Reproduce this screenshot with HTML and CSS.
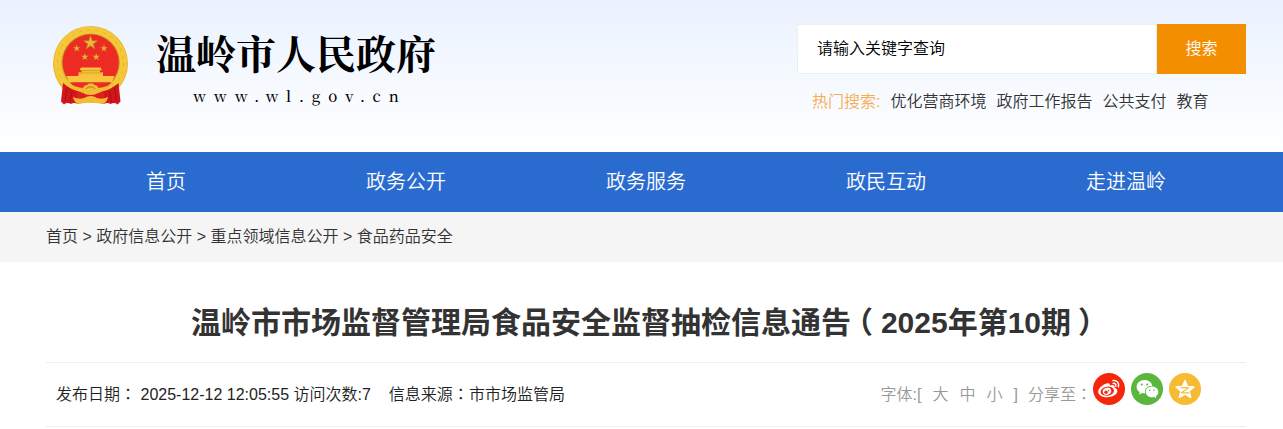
FILE: index.html
```html
<!DOCTYPE html>
<html lang="zh-CN">
<head>
	<meta charset="utf-8">
	<title>温岭市人民政府</title>
	<link rel="stylesheet" href="styles.css">
</head>
<body>

	<header class="header">
		<div class="wrap header-inner">

			<a class="logo" href="#">
				<svg class="emblem" viewBox="0 0 76 80" aria-hidden="true">
					<defs>
						<path id="star" d="M0-10 2.3-3.1 9.5-3.1 3.7 1.2 5.9 8.1 0 3.8-5.9 8.1-3.7 1.2-9.5-3.1-2.3-3.1z"/>
					</defs>
					<circle cx="37.5" cy="37.5" r="37.5" fill="#e9b52e"/>
					<circle cx="37.5" cy="37" r="33" fill="none" stroke="#f5c83a" stroke-width="7"/>
					<circle cx="37.5" cy="37" r="33" fill="none" stroke="#e6b030" stroke-width="1" stroke-dasharray="3 5"/>
					<circle cx="37.7" cy="36.5" r="28.8" fill="#c48a20"/>
					<circle cx="37.7" cy="36.5" r="28" fill="#ee2a24"/>
					<g fill="#e8b838" stroke="#b87a1c" stroke-width=".8">
						<use href="#star" transform="translate(37.5 17) scale(.75)"/>
						<use href="#star" transform="translate(23.7 22.4) scale(.38)"/>
						<use href="#star" transform="translate(51 22.4) scale(.38)"/>
						<use href="#star" transform="translate(31.8 31) scale(.38)"/>
						<use href="#star" transform="translate(43.2 31) scale(.38)"/>
					</g>
					<path d="M28 41.500h19.500l1.500 2.800H26.500zM28.500 44.300h18.500v2h-18.500zM25.500 46.300h24.500v3.700H25.500z" fill="#f6c43a"/>
					<path d="M28 44.600h19.500M26 47h23.500" stroke="#c8701c" stroke-width=".5"/>
					<path d="M13.500 50h48l-2.800 6.500h-42.400z" fill="#f8c63e"/>
					<path d="M17 56.500h41.500l-9 9h-23z" fill="#ee2a24"/>
					<path d="M10 57q8 7 16 8l-1 13q-4-2-7 0-4-2-7 .5l-3-3z" fill="#d3161b"/>
					<path d="M65.500 57q-8 7-16 8l1 13q4-2 7 0 4-2 7 .5l3-3z" fill="#d3161b"/>
					<path d="M14 62l-2 13M19 65l-2 11M61.500 62l2 13M56.500 65l2 11" stroke="#a81016" stroke-width="1"/>
					<path d="M24 65q14 6 27 0v13q-13-4-27 0z" fill="#e01f20"/>
					<path d="M13 56q8 5 17 6 1-3 4-3l1.500-1.500h4.500l1.500 1.500q3 0 4 3 9-1 17-6-6 9-17 10-2 3-8 3t-8-3q-11-1-16.500-10z" fill="#f2bd35"/>
					<path d="M33 63a5 4 0 0 1 9 0" fill="none" stroke="#b9761a" stroke-width="1"/>
					<path d="M20 71q6 3 11 1 7-4 13 0 5 2 11-1-1 5-5 7-5-1-9-1h-7q-4 0-9 1-4-2-5-7z" fill="#f2bd35"/>
				</svg>
				<span class="logo-text">
					<span class="logo-name">温岭市人民政府</span>
					<span class="logo-url">www.wl.gov.cn</span>
				</span>
			</a>

			<div class="search">
				<form class="search-form">
					<input class="search-input" type="text" value="请输入关键字查询" aria-label="请输入关键字查询">
					<button class="search-btn" type="button">搜索</button>
				</form>
				<div class="hot">
					<span class="hot-title">热门搜索:</span>
					<a href="#">优化营商环境</a>
					<a href="#">政府工作报告</a>
					<a href="#">公共支付</a>
					<a href="#">教育</a>
				</div>
			</div>

		</div>
	</header>

	<nav class="nav">
		<div class="wrap nav-inner">
			<a href="#">首页</a>
			<a href="#">政务公开</a>
			<a href="#">政务服务</a>
			<a href="#">政民互动</a>
			<a href="#">走进温岭</a>
		</div>
	</nav>

	<div class="crumbs">
		<div class="wrap">
			<a href="#">首页</a> &gt; <a href="#">政府信息公开</a> &gt; <a href="#">重点领域信息公开</a> &gt; <a href="#">食品药品安全</a>
		</div>
	</div>

	<main class="wrap">
		<h1 class="title">温岭市市场监督管理局食品安全监督抽检信息通告<span class="paren">（</span>2025年第10期<span class="paren">）</span></h1>

		<div class="meta">
			<div class="meta-info">
				<span>发布日期<span class="colon" lang="zh-TW">：</span> 2025-12-12 12:05:55 访问次数:7</span>
				<span>信息来源<span class="colon" lang="zh-TW">：</span>市市场监管局</span>
			</div>

			<div class="tools">
				<div class="font-size">
					<span>字体:[</span>
					<a href="#">大</a>
					<a href="#">中</a>
					<a href="#">小</a>
					<span>]</span>
				</div>
				<span class="share-label">分享至<span class="colon" lang="zh-TW">：</span></span>
				<div class="share">
					<a href="#" aria-label="微博">
						<svg viewBox="0 0 32 32">
							<circle cx="16" cy="16" r="16" fill="#f6260c"/>
							<path d="M13.500 10.500c2-.8 3.600-.2 3.300 2 2.800-1.200 5.500-.6 4.800 2.300 2.200.8 3.400 2.300 2.600 4.300-1.200 3.200-5.200 5.200-9.800 5.200-5.200 0-9.200-2.300-9.200-5.800 0-3 4.300-6.800 8.300-8z" fill="#fff"/>
							<ellipse cx="14.300" cy="18.200" rx="6.800" ry="4.600" transform="rotate(-8 14.300 18.200)" fill="#f6260c"/>
							<ellipse cx="14" cy="18.300" rx="4.300" ry="3.500" transform="rotate(-18 14 18.300)" fill="#fff"/>
							<circle cx="13" cy="19.200" r="1.700" fill="#f6260c"/>
							<circle cx="15.600" cy="17.700" r=".7" fill="#f6260c"/>
							<path d="M20 7.600c3.800-.6 6.500 2.400 5.400 6.200M20.200 10.400c1.800-.3 3 1 2.600 2.800" fill="none" stroke="#fff" stroke-width="1.500" stroke-linecap="round"/>
						</svg>
					</a>
					<a href="#" aria-label="微信">
						<svg viewBox="0 0 32 32">
							<circle cx="16" cy="16" r="16" fill="#5cb53c"/>
							<path d="M13.500 7c4.200 0 7.300 2.500 7.700 5.700-4.300 0-7.300 2.800-7.300 6 0 .6.1 1.200.3 1.700-1 .1-2.200 0-3.200-.3l-3 1.600.8-2.500C6.900 17.900 5.600 16 5.600 13.700 5.600 10 9 7 13.500 7z" fill="#fff"/>
							<path d="M21 13.500c3.600 0 6.300 2.400 6.300 5.400 0 1.800-.9 3.300-2.400 4.300l.6 2-2.300-1.200c-4.400 1-8.500-1.500-8.500-5.100 0-3 2.700-5.400 6.300-5.400z" fill="#fff"/>
							<g fill="#5cb53c">
								<circle cx="10.800" cy="11.600" r="1"/>
								<circle cx="16.200" cy="11.600" r="1"/>
								<circle cx="18.800" cy="17.200" r=".8"/>
								<circle cx="23" cy="17.200" r=".8"/>
							</g>
						</svg>
					</a>
					<a href="#" aria-label="QQ空间">
						<svg viewBox="0 0 32 32">
							<circle cx="16" cy="16" r="16" fill="#f6bb32"/>
							<path d="M16 7.500l2.400 5.900 6.500.5-4.900 4.200 1.600 6.300-5.600-3.400-5.600 3.400 1.600-6.300-4.900-4.200 6.500-.5z" fill="#fff" stroke="#fff" stroke-width="1.500" stroke-linejoin="round"/>
							<path d="M11.800 14.900q3.800-.7 7.300 0l-6.300 4.700q4 .6 7.500.1" fill="none" stroke="#f6bb32" stroke-width="1.300"/>
						</svg>
					</a>
				</div>
			</div>
		</div>
	</main>

</body>
</html>
```
FILE: styles.css
```css
body {
	margin: 0;
	background: #fff;
	color: #333;
	font-family: "Liberation Sans", "Noto Sans CJK SC", sans-serif;
	font-size: 16px;
	font-weight: 350;
	line-height: 24px;
}
a {
	color: inherit;
	text-decoration: none;
}
.wrap {
	box-sizing: border-box;
	max-width: 1209px;
	margin: 0 auto;
	padding-left: 9px;
}

/* header */
.header {
	background: linear-gradient(#eaf2ff, #fff);
}
.header-inner {
	display: flex;
	justify-content: space-between;
	min-height: 152px;
}
.logo {
	display: flex;
	align-items: flex-start;
	gap: 27px;
	padding: 26px 0 0 7px;
	color: #000;
}
.emblem {
	width: 76px;
	height: 80px;
}
.logo-text {
	display: flex;
	flex-direction: column;
	align-items: center;
	font-family: "Noto Serif CJK SC", "Noto Sans CJK SC", serif;
}
.logo-name {
	font-size: 40px;
	font-weight: bold;
	line-height: 52px;
}
.logo-url {
	padding-left: 8px;
	font-size: 15px;
	font-weight: 500;
	letter-spacing: 8px;
	line-height: 36px;
}
.search {
	width: 449px;
	padding-top: 24px;
}
.search-form {
	display: flex;
	height: 50px;
}
.search-input {
	flex: 1;
	min-width: 0;
	box-sizing: border-box;
	padding: 0 19px;
	border: 1px solid #eee;
	background: #fff;
	color: #000;
	font: inherit;
}
.search-btn {
	width: 89px;
	padding: 0;
	border: 0;
	background: #f38e00;
	color: #fff;
	font: inherit;
	cursor: pointer;
}
.hot {
	display: flex;
	gap: 10px;
	padding: 16px 0 0 15px;
}
.hot-title {
	color: #f7ac54;
}

/* main menu */
.nav {
	background: #2a6bd0;
}
.nav-inner {
	display: flex;
}
.nav-inner a {
	flex: 1;
	color: #fff;
	font-size: 20px;
	line-height: 60px;
	text-align: center;
}

.crumbs {
	background: #f5f5f5;
	line-height: 50px;
}

/* article */
.title {
	margin: 0;
	padding: 36px 0 15px;
	font-size: 30px;
	line-height: 49px;
	text-align: center;
}
/* half-width glyph centred in a full-width cell */
.paren {
	padding: 0 8px 0 7px;
	font-feature-settings: "halt";
}
.colon {
	font-family: "Noto Sans CJK TC", sans-serif;
	line-height: 1;
}
.meta {
	display: flex;
	justify-content: space-between;
	align-items: center;
	height: 63px;
	padding: 0 45px 0 10px;
	border-top: 1px solid #eee;
	border-bottom: 1px solid #eee;
}
.meta-info {
	display: flex;
	gap: 18px;
	color: #222;
}
.tools {
	display: flex;
	align-items: center;
	color: #999;
}
.font-size {
	display: flex;
	gap: 11px;
}
.share-label {
	margin-left: 10px;
}
.share {
	display: flex;
	gap: 6px;
	margin-left: 1px;
	padding-bottom: 12px;
}
.share svg {
	display: block;
	width: 32px;
	height: 32px;
}
```
